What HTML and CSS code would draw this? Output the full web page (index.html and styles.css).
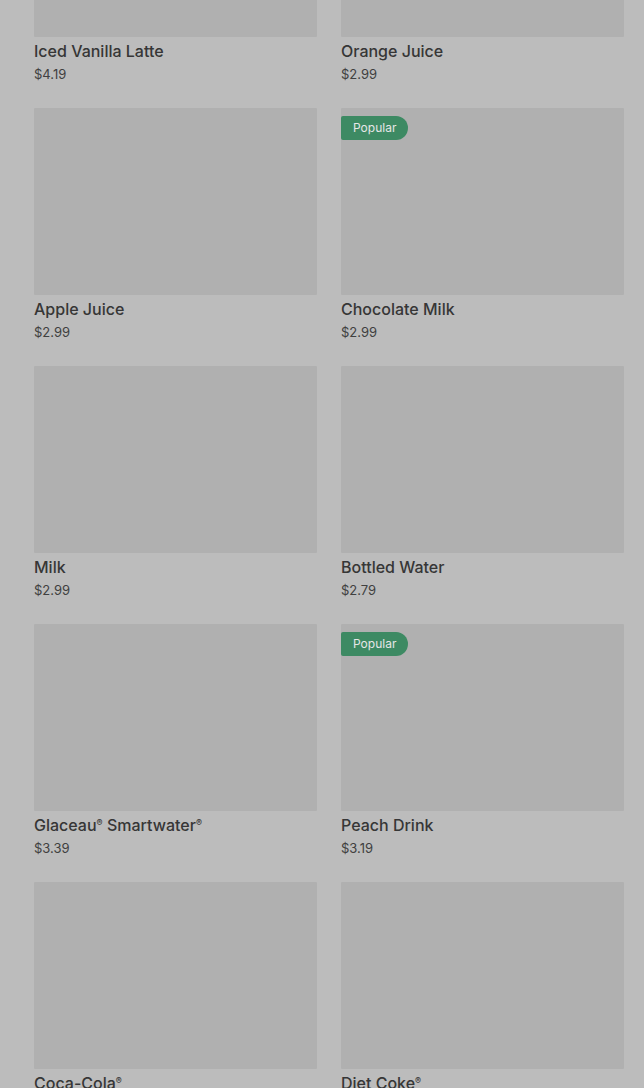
FILE: index.html
```html
<!DOCTYPE html>
<html lang="en">
<head>
    <meta charset="UTF-8">
    <meta name="viewport" content="width=device-width, initial-scale=1.0">
    <title>Drinks</title>
    <link rel="stylesheet" href="styles.css">
</head>
<body>
    <div class="menu">
        <ul class="item-grid">
            <li class="item">
                <div class="item-image"></div>
                <h3 class="item-name">Iced Vanilla Latte</h3>
                <p class="item-price">$4.19</p>
            </li>
            <li class="item">
                <div class="item-image"></div>
                <h3 class="item-name">Orange Juice</h3>
                <p class="item-price">$2.99</p>
            </li>
            <li class="item">
                <div class="item-image"></div>
                <h3 class="item-name">Apple Juice</h3>
                <p class="item-price">$2.99</p>
            </li>
            <li class="item">
                <div class="item-image">
                    <span class="badge">Popular</span>
                </div>
                <h3 class="item-name">Chocolate Milk</h3>
                <p class="item-price">$2.99</p>
            </li>
            <li class="item">
                <div class="item-image"></div>
                <h3 class="item-name">Milk</h3>
                <p class="item-price">$2.99</p>
            </li>
            <li class="item">
                <div class="item-image"></div>
                <h3 class="item-name">Bottled Water</h3>
                <p class="item-price">$2.79</p>
            </li>
            <li class="item">
                <div class="item-image"></div>
                <h3 class="item-name">Glaceau<sup>®</sup> Smartwater<sup>®</sup></h3>
                <p class="item-price">$3.39</p>
            </li>
            <li class="item">
                <div class="item-image">
                    <span class="badge">Popular</span>
                </div>
                <h3 class="item-name">Peach Drink</h3>
                <p class="item-price">$3.19</p>
            </li>
            <li class="item">
                <div class="item-image"></div>
                <h3 class="item-name">Coca-Cola<sup>®</sup></h3>
                <p class="item-price">$3.39</p>
            </li>
            <li class="item">
                <div class="item-image"></div>
                <h3 class="item-name">Diet Coke<sup>®</sup></h3>
                <p class="item-price">$3.39</p>
            </li>
        </ul>
    </div>
</body>
</html>
```

FILE: styles.css
```css
* {
    margin: 0;
    padding: 0;
    box-sizing: border-box;
}

body {
    background: #bcbcbc;
    color: #383838;
    font-family: Inter, 'Noto Sans', sans-serif;
    overflow: hidden;
    height: 1088px;
}

/* page is scrolled: the first row's images are cut at the top */
.menu {
    margin-top: -150px;
    padding: 0 20px 0 34px;
}

.item-grid {
    list-style: none;
    display: grid;
    grid-template-columns: 1fr 1fr;
    column-gap: 24px;
    row-gap: 25px;
}

.item-image {
    position: relative;
    height: 187px;
    background: #b0b0b0;
    border-radius: 1px;
}

.badge {
    position: absolute;
    top: 8px;
    left: 0;
    height: 24px;
    padding: 0 12px;
    line-height: 24px;
    font-size: 12px;
    color: #e6e6e6;
    background: #3d8a63;
    border-radius: 2px 12px 12px 2px;
}

.item-name {
    margin-top: 4px;
    font-size: 16px;
    font-weight: 500;
    line-height: 20px;
    color: #363636;
}

.item-name sup {
    font-size: 9px;
    vertical-align: 5px;
    line-height: 0;
}

.item-price {
    margin-top: 4px;
    font-size: 13px;
    line-height: 18px;
    color: #404040;
}
```
